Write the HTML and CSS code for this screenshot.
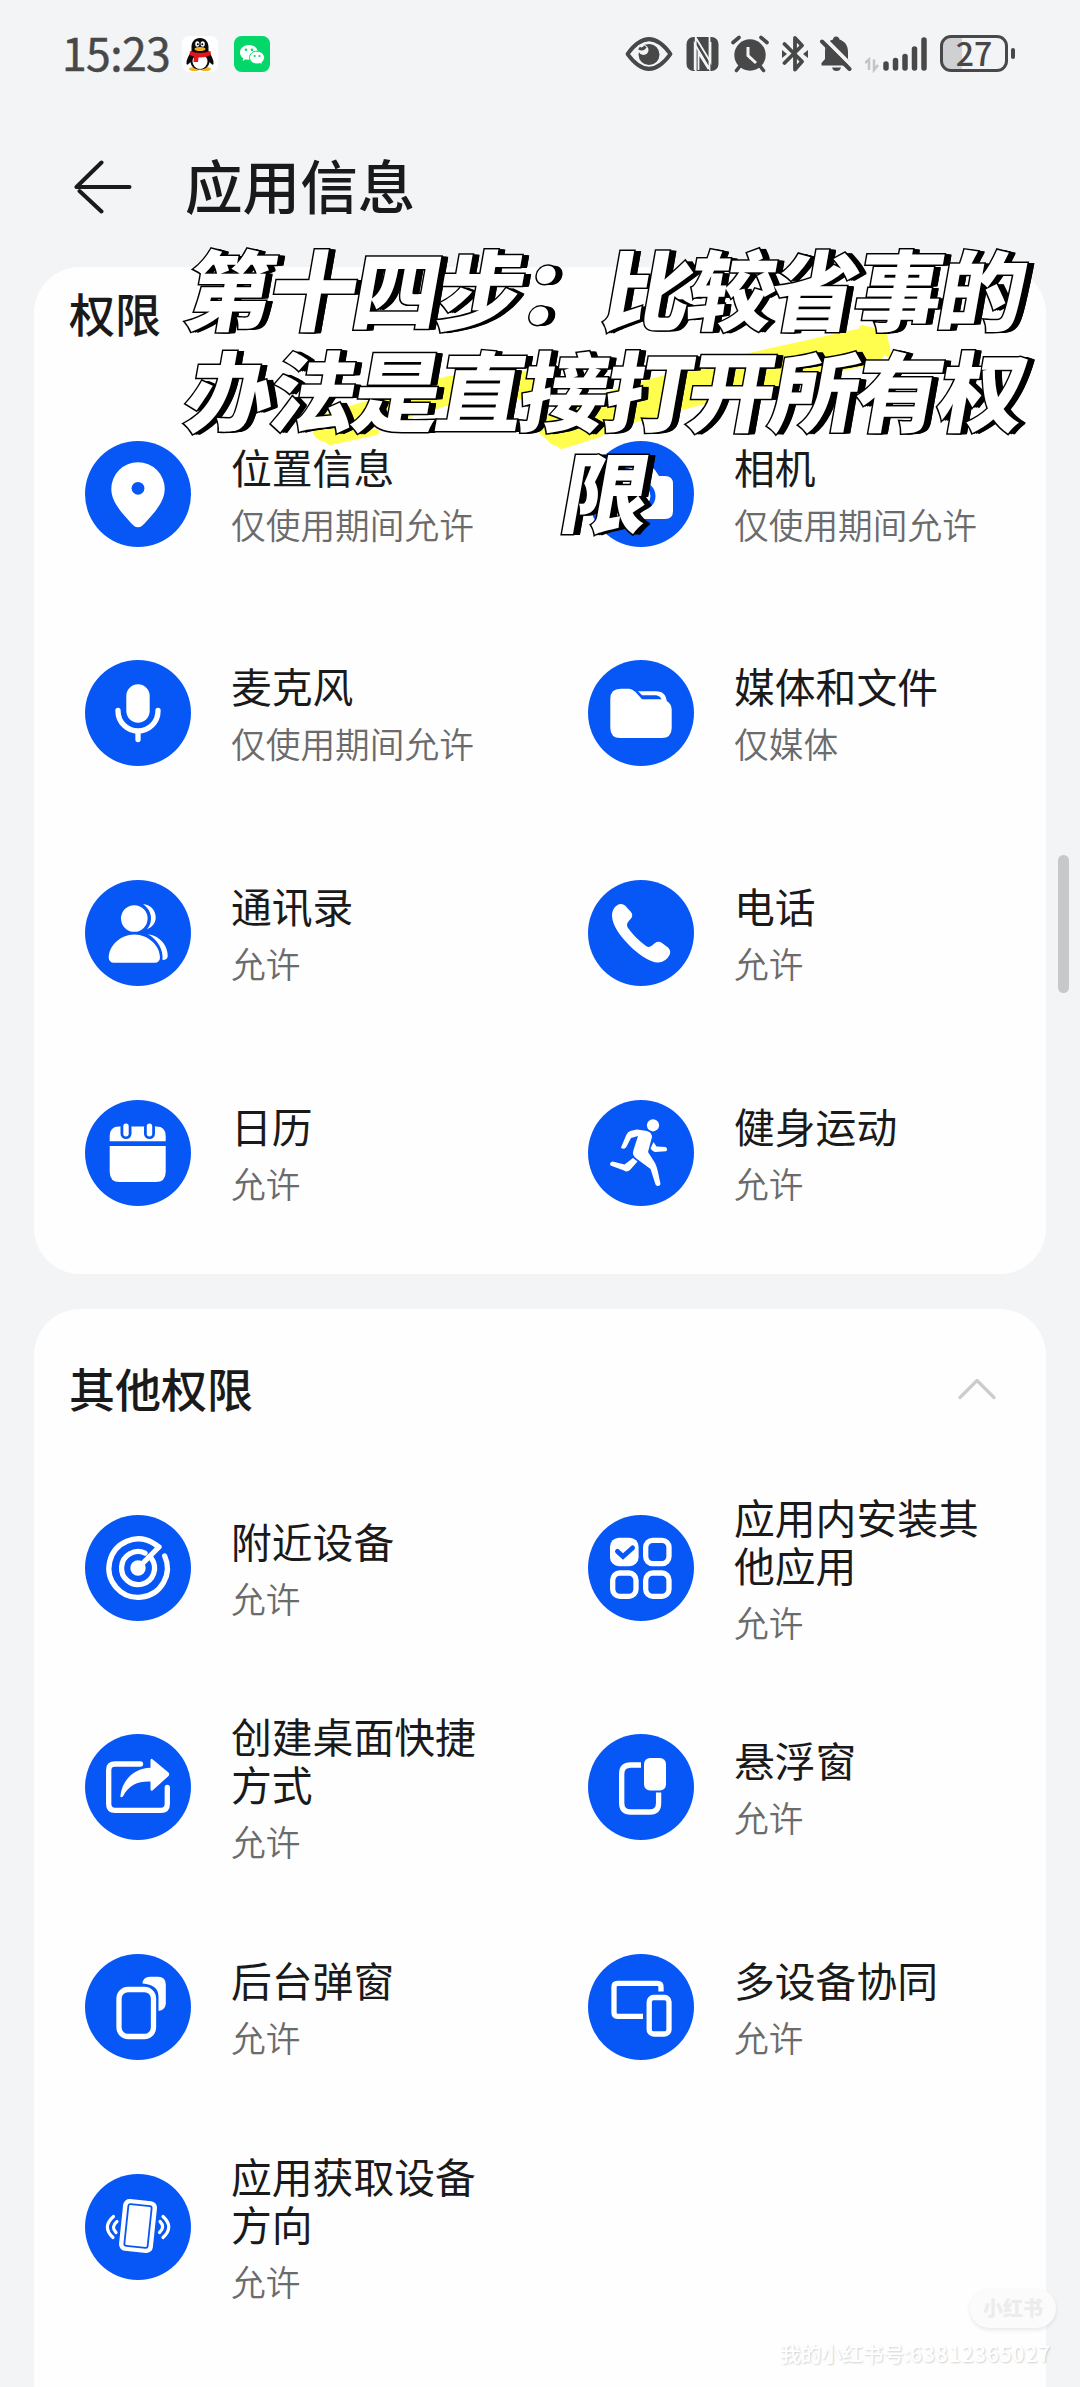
FILE: index.html
```html
<!DOCTYPE html>
<html lang="zh-CN">
<head>
<meta charset="utf-8">
<title>应用信息</title>
<link rel="stylesheet" href="styles.css">
</head>
<body>
<div class="page">
  <header class="status">
    <span class="time">15:23</span>
    <svg class="app-icon" width="36" height="36" viewBox="0 0 36 36">
      <rect width="36" height="36" rx="7" fill="#fff"/>
      <ellipse cx="12.5" cy="33" rx="5.5" ry="2" fill="#f5b21c"/><ellipse cx="23.5" cy="33" rx="5.5" ry="2" fill="#f5b21c"/>
      <path d="M18 2C12.500 2 9.500 6 9.500 11V15C7 19 4 24 4.500 28C5.500 30 7.500 27 8.500 26C9 31 13 33.500 18 33.500S27 31 27.500 26C28.500 27 30.500 30 31.500 28C32 24 29 19 26.500 15V11C26.500 6 23.500 2 18 2Z" fill="#0a0a0a"/>
      <ellipse cx="18" cy="25.500" rx="7.500" ry="7.500" fill="#fff"/>
      <path d="M8 15Q18 19 28.500 15L29 19Q23 22 16.500 21.500L16 26H11.500L12 20.500L7.500 19Z" fill="#e3141c"/>
      <ellipse cx="15.300" cy="8" rx="2.100" ry="2.800" fill="#fff"/><ellipse cx="20.700" cy="8" rx="2.100" ry="2.800" fill="#fff"/>
      <circle cx="15.800" cy="8.300" r="1"/><circle cx="20.300" cy="8.300" r="1"/>
      <ellipse cx="18" cy="13" rx="5.500" ry="2" fill="#f5b21c"/>
    </svg>
    <svg class="app-icon wechat" width="36" height="36" viewBox="0 0 36 36">
      <rect width="36" height="36" rx="7.500" fill="#04d76a"/>
      <path d="M15 9C9.800 9 6 12.300 6 16.500C6 19 7.300 21 9.300 22.300L8.600 25L11.800 23.300Q13.300 23.800 15 23.800C20.200 23.800 24 20.700 24 16.500S20.200 9 15 9Z" fill="#fff"/>
      <path d="M23 15.200C18.700 15.200 15.500 18 15.500 21.600S18.700 28 23 28Q24.500 28 25.800 27.500L28.300 28.800L27.800 26.500C29.500 25.300 30.500 23.600 30.500 21.600C30.500 18 27.300 15.200 23 15.200Z" fill="#fff" stroke="#04d76a"/>
      <g fill="#04d76a"><circle cx="12" cy="13.800" r="1.300"/><circle cx="18" cy="13.800" r="1.300"/><circle cx="20.700" cy="20" r="1.100"/><circle cx="25.500" cy="20" r="1.100"/></g>
    </svg>
    <div class="indicators">
      <svg width="48" height="38" viewBox="0 0 48 38"><path d="M2.500 19Q24-8 45.500 19Q24 46 2.500 19Z" transform="translate(0 -1.900) scale(1 1.100)" fill="none" stroke="#484848" stroke-width="3.800" stroke-linejoin="round"/><circle cx="24" cy="19.500" r="10.500" fill="#484848"/><circle cx="18.500" cy="15" r="5" fill="#f2f4f6"/><path d="M14 13Q17.500 15.500 20.500 11.500" fill="none" stroke="#484848" stroke-width="3"/></svg>
      <svg width="33" height="38" viewBox="0 0 33 38"><rect x=".5" y="2" width="32" height="34" rx="7" fill="#484848"/><path d="M9.700 36V2.500L24.500 27V7" fill="none" stroke="#f2f4f5" stroke-width="1.800"/><path d="M8.700 35V9L23.500 34V2" fill="none" stroke="#f2f4f5" stroke-width="1.800"/><path d="M12.500 35V18L22.500 34" fill="none" stroke="#f2f4f5" stroke-width="1.800"/></svg>
      <svg width="38" height="38" viewBox="0 0 38 38"><g stroke="#484848" stroke-width="3.600" stroke-linecap="round"><path d="M2 7.500L8 2.500M36 7.500L30 2.500M9 31L5.500 35.500M29 31L32.500 35.500"/></g><circle cx="19" cy="20" r="15.700" fill="#484848"/><path d="M17 12V20.500L25 28" fill="none" stroke="#f2f4f5" stroke-width="3"/></svg>
      <svg width="26" height="38" viewBox="0 0 26 38"><path d="M2.500 9L20 26.500L13 34.500V3L20 10.500L2.500 28" fill="none" stroke="#484848" stroke-width="3.800" stroke-linejoin="round" stroke-linecap="round"/><path d="M0 15L5 19L0 23ZM26 15L21 19L26 23Z" fill="#484848"/></svg>
      <svg width="32" height="38" viewBox="0 0 32 38"><path d="M16 1.500C14 1.500 13 3 13 4.500C7 6.500 5 11 5 17V24L1.500 28V30.500H30.500V28L28 24V17C28 10.500 25 6.500 19.500 4.500C19.500 3 18 1.500 16 1.500ZM12 32.500H21Q20 36 16.500 36Q13 36 12 32.500Z" fill="#484848"/><path d="M4.500 3.500L34 33" stroke="#f2f4f5" stroke-width="4"/><path d="M2 6.500L29.500 34" stroke="#484848" stroke-width="4" stroke-linecap="round"/></svg>
      <svg class="signal" width="62" height="38" viewBox="0 0 62 38"><path d="M0 28L4 24.500V35M9 24.500V35L13 30" fill="none" stroke="#c3c5c6" stroke-width="2.500"/><g stroke="#484848" stroke-width="5.500" stroke-linecap="round"><path d="M21 29V33M30.500 25.500V33M40 21.500V33M49.500 14V33M59 5V33"/></g></svg>
      <div class="battery"><span>27</span></div>
      <i class="nub"></i>
    </div>
  </header>

  <div class="titlebar">
    <svg width="58" height="54" viewBox="0 0 58 54"><path d="M27.500 2.500L2.500 27H55.500M5.500 31L27.500 51.500" fill="none" stroke="#191a1b" stroke-width="4" stroke-linecap="round" stroke-linejoin="round"/></svg>
    <h1>应用信息</h1>
  </div>

  <section class="card">
    <div class="card-head"><h2>权限</h2></div>
    <div class="grid">
      <div class="item"><svg class="ic" viewBox="0 0 106 106"><circle class="b" cx="53" cy="53" r="53"/><path class="w" d="M53 86.300C50 86.300 48 84 46 82C35 70 26.300 60 26.300 47.800A26.700 26.500 0 0 1 79.700 47.800C79.700 60 71 70 60 82C58 84 56 86.300 53 86.300Z"/><circle class="b" cx="53" cy="47.300" r="6.400"/></svg><div class="txt"><h3>位置信息</h3><p>仅使用期间允许</p></div></div>
      <div class="item"><svg class="ic" viewBox="0 0 106 106"><circle class="b" cx="53" cy="53" r="53"/><path class="w" d="M30 35H35L39 29Q40.500 27 43 27H63Q65.500 27 67 29L71 35H77Q85 35 85 43V70Q85 78 77 78H29Q21 78 21 70V43Q21 35 30 35Z"/><circle class="s" cx="53" cy="55" r="12" stroke="#0757f7" stroke-width="5"/></svg><div class="txt"><h3>相机</h3><p>仅使用期间允许</p></div></div>
      <div class="item"><svg class="ic" viewBox="0 0 106 106"><circle class="b" cx="53" cy="53" r="53"/><rect class="w" x="41.300" y="24.300" width="23.400" height="38.400" rx="11.700"/><path class="l" d="M33 50.500V51A20 20 0 0 0 73 51V50.500M53 72V79.500"/></svg><div class="txt"><h3>麦克风</h3><p>仅使用期间允许</p></div></div>
      <div class="item"><svg class="ic" viewBox="0 0 106 106"><circle class="b" cx="53" cy="53" r="53"/><path class="w" d="M32.500 28.700H41Q44 28.700 46.500 31.200H68C75 31.200 78 35 78.800 41Q83.700 44 83.700 50V68Q83.700 78 73.700 78H32.300Q22.300 78 22.300 68V39Q22.300 28.700 32.500 28.700Z"/><path class="b" d="M45.500 29.700L54 39.300H73.500Q72 35.800 68 35.300H54L49 30Z"/></svg><div class="txt"><h3>媒体和文件</h3><p>仅媒体</p></div></div>
      <div class="item"><svg class="ic" viewBox="0 0 106 106"><circle class="b" cx="53" cy="53" r="53"/><circle class="w" cx="49.300" cy="38.500" r="13.300"/><path class="w" d="M58 24.300A16.500 16.500 0 0 1 62 49.300C67.500 47 70.700 43 70.700 37.500C70.700 30 65 24.300 58 24.300ZM28.700 82.700A5 5 0 0 1 23.700 77.500C24 66 35 54.500 49.300 54.500S75 66 75 77.500A5 5 0 0 1 70 82.700ZM63 54.300C76 56 83 67 82.700 76Q82.500 80 77.500 80C78.500 70 73 60 63 54.300Z"/></svg><div class="txt"><h3>通讯录</h3><p>允许</p></div></div>
      <div class="item"><svg class="ic" viewBox="0 0 106 106"><circle class="b" cx="53" cy="53" r="53"/><path class="w" d="M24 36C24 30 27 26 31 24.300Q34.500 23.300 37 25.500L43 32Q45.500 35.500 43 38.500L40 42Q38 45 40 48C45 55 51 61 58 66Q61 68 64 65.500L67 63Q70.500 60.500 74 63L80 67.500Q83.500 71 81.500 75Q78 82 70 82.600C62 82.500 49 73.500 41 65C33 57 24.500 46 24 36Z"/></svg><div class="txt"><h3>电话</h3><p>允许</p></div></div>
      <div class="item"><svg class="ic" viewBox="0 0 106 106"><circle class="b" cx="53" cy="53" r="53"/><path class="w" d="M24.700 41.300V36Q24.700 26.500 34 26.500H71.500Q80.700 26.500 80.700 36V41.300ZM24.700 46H80.700V72Q80.700 82 70.700 82H34.700Q24.700 82 24.700 72Z"/><g class="b"><rect x="35.500" y="22" width="11" height="17" rx="5.500"/><rect x="59" y="22" width="11" height="17" rx="5.500"/></g><g class="w"><rect x="38.300" y="23.500" width="5.400" height="13" rx="2.700"/><rect x="61.800" y="23.500" width="5.400" height="13" rx="2.700"/></g></svg><div class="txt"><h3>日历</h3><p>允许</p></div></div>
      <div class="item"><svg class="ic" viewBox="0 0 106 106"><circle class="b" cx="53" cy="53" r="53"/><circle class="w" cx="65" cy="25.300" r="6.100"/><path class="w" d="M49 29.500L59 31Q64 32.500 64 37L60 52L67 63Q69 67 70 72L72.500 84Q72 86.500 69 86L67.500 84.500L62.500 69L49 59Q43.500 55.500 45.500 50L50 36L43 38L38 47.500Q35 50 33 47.500L38.500 34.500Q40 31.500 43 30.700Z"/><path class="w" d="M65.500 42L68.500 46.500L77.500 47Q80.500 49 78 51.300L67 52Q64 51 62.500 48.500ZM45 58L49.500 61.500L42 70Q39 72.500 36 70.500L22.500 65.500Q21 62.500 24.500 61.500L36.500 64.500Z"/></svg><div class="txt"><h3>健身运动</h3><p>允许</p></div></div>
    </div>
  </section>

  <section class="card other">
    <div class="card-head"><h2>其他权限</h2><svg width="38" height="22" viewBox="0 0 38 22"><path d="M2 19.500L19 2.500L36 19.500" fill="none" stroke="#cbcccc" stroke-width="3.200" stroke-linecap="round" stroke-linejoin="round"/></svg></div>
    <div class="grid">
      <div class="item"><svg class="ic" viewBox="0 0 106 106"><circle class="b" cx="53" cy="53" r="53"/><path class="l" d="M79.700 41A29.200 29.200 0 1 1 68.500 28.300L74 32L53 53M66.500 43.500A16.500 16.500 0 1 1 60 38.100"/><circle class="w" cx="53" cy="53" r="7.700"/></svg><div class="txt"><h3>附近设备</h3><p>允许</p></div></div>
      <div class="item"><svg class="ic" viewBox="0 0 106 106"><circle class="b" cx="53" cy="53" r="53"/><rect class="w" x="22" y="22.700" width="28.600" height="28.500" rx="9"/><g class="l"><rect x="57.700" y="25.300" width="23.300" height="23.300" rx="7"/><rect x="24.700" y="58" width="23.300" height="23.300" rx="7"/><rect x="57.700" y="58" width="23.300" height="23.300" rx="7"/></g><path class="s" d="M29.500 36.500L35 41.500L44.500 33" stroke="#0757f7" stroke-width="5" stroke-linecap="round"/></svg><div class="txt"><h3>应用内安装其他应用</h3><p>允许</p></div></div>
      <div class="item"><svg class="ic" viewBox="0 0 106 106"><circle class="b" cx="53" cy="53" r="53"/><path class="l" d="M55.500 30H30Q23.700 30 23.700 36V70Q23.700 76.300 30 76.300H76Q82.300 76.300 82.300 70V53.500"/><path class="w" d="M67.500 25.300L83.500 38.500Q85 40.300 83.500 42L67.500 56.500Q65.500 57.500 65.500 55V47.500C53 47 44 51 38.500 61.500Q37 64.500 35.300 62.500C37 46 49 34 65.500 33.700V26.500Q65.500 24 67.500 25.300Z"/></svg><div class="txt"><h3>创建桌面快捷方式</h3><p>允许</p></div></div>
      <div class="item"><svg class="ic" viewBox="0 0 106 106"><circle class="b" cx="53" cy="53" r="53"/><path class="l butt" d="M53 31H42.500Q33.700 31 33.700 40V69Q33.700 78 42.500 78H62Q70.600 78 70.600 69V58.500"/><rect class="w" x="56" y="24" width="22" height="32.500" rx="6"/></svg><div class="txt"><h3>悬浮窗</h3><p>允许</p></div></div>
      <div class="item"><svg class="ic" viewBox="0 0 106 106"><circle class="b" cx="53" cy="53" r="53"/><rect class="l" x="34" y="35.500" width="34.500" height="47" rx="9"/><path class="w" d="M57.500 29.500Q58 22.700 65 22.700H73Q80.800 22.700 80.800 30.500V50Q80 56 73.500 57V42Q73 30.500 57.500 29.500Z"/></svg><div class="txt"><h3>后台弹窗</h3><p>允许</p></div></div>
      <div class="item"><svg class="ic" viewBox="0 0 106 106"><circle class="b" cx="53" cy="53" r="53"/><path class="l butt" d="M73 37.500V33Q73 29.300 69.500 29.300H29.500Q26 29.300 26 33V58.500Q26 62.300 29.500 62.300H55"/><rect class="l" x="61.200" y="43.500" width="19.800" height="36.500" rx="4.500"/></svg><div class="txt"><h3>多设备协同</h3><p>允许</p></div></div>
      <div class="item"><svg class="ic" viewBox="0 0 106 106"><circle class="b" cx="53" cy="53" r="53"/><g transform="rotate(6 53 52)"><rect class="w" x="36" y="26" width="34" height="52" rx="6.500"/><rect class="s" x="41.300" y="31" width="23.400" height="42" rx="2" stroke="#0757f7" stroke-width="1.800"/></g><g class="s" stroke="#fff" stroke-width="3.200" stroke-linecap="round"><path d="M28.500 42.500Q16.500 53 28 63.500M32 47.500Q25.500 53 31 58.500M78 42.500Q89.500 53 78 63.500M75 47.500Q80.500 53 74.500 58.500"/></g></svg><div class="txt"><h3>应用获取设备方向</h3><p>允许</p></div></div>
    </div>
  </section>

  <i class="scrollbar"></i>

  <svg class="brush" width="600" height="140" viewBox="0 0 600 140">
    <g fill="none" stroke="#fffe4e" stroke-linejoin="round" stroke-linecap="round">
      <path d="M26 108L150 70L240 64" stroke-width="28"/>
      <path d="M262 108L330 84L460 50L568 26" stroke-width="38"/>
      <path d="M10 106L30 122L76 112M242 112L262 126L300 114M562 8L584 14L588 34" stroke-width="6"/>
    </g>
  </svg>
  <p class="caption"><span>第十四步：比较省事的</span><span>办法是直接打开所有权</span><span>限</span></p>

  <div class="watermark"><span class="pill">小红书</span><span class="uid">我的小红书号:<b>63812365027</b></span></div>
</div>
</body>
</html>
```
FILE: styles.css
```css
* { box-sizing: border-box; }
body {
  margin: 0;
  font-family: "Noto Sans CJK SC", sans-serif;
  color: #1a1a1b;
}
h1, h2, h3, p { margin: 0; font-weight: 400; }
svg { display: block; flex: none; }

.page {
  position: relative;
  width: 1080px;
  height: 2387px;
  overflow: hidden;
  background: #f2f4f6;
  display: flex;
  flex-direction: column;
}

.status {
  height: 107px;
  padding: 0 65px 0 62px;
  display: flex;
  align-items: center;
  color: #484848;
}
.time {
  width: 120px;
  padding-bottom: 3px;
  font-size: 44.5px;
  line-height: 60px;
  letter-spacing: -.6px;
  -webkit-text-stroke: .5px #484848;
}
.wechat { margin-left: 16px; }
.indicators { margin-left: auto; display: flex; align-items: center; }
.indicators svg + svg { margin-left: 12.6px; }
.battery {
  width: 68px;
  height: 37px;
  margin-left: 13px;
  border: 3px solid #484848;
  border-radius: 11px;
  background: linear-gradient(90deg, #ced0d1 30%, transparent 30%);
  display: flex;
  align-items: center;
  justify-content: center;
  padding-bottom: 4px;
  font: 500 32px/30px "Noto Sans CJK SC", sans-serif;
}
.nub { width: 4px; height: 11px; margin-left: 3px; border-radius: 2px; background: #484848; }

.titlebar {
  height: 160px;
  padding-left: 74px;
  display: flex;
  align-items: center;
  gap: 53px;
}
.titlebar h1 { padding-bottom: 6px; font-size: 57.6px; line-height: 80px; font-weight: 500; }

.card {
  width: 1012px;
  height: 1007px;
  margin-left: 34px;
  border-radius: 46px;
  background: #fefefe;
}
.card.other {
  flex: 1;
  margin-top: 35px;
  border-radius: 46px 46px 0 0;
}
.card-head {
  height: 117px;
  padding: 15px 50px 0 35px;
  display: flex;
  justify-content: space-between;
  align-items: flex-start;
}
.card-head h2 { font-size: 46px; line-height: 60px; font-weight: 500; }
.other .card-head { height: 149px; padding-top: 10px; align-items: center; }
.other .card-head h2 { padding-bottom: 4px; }

.grid {
  padding-left: 51px;
  display: grid;
  grid-template-columns: 503px 1fr;
  grid-auto-rows: 219.6px;
}
.item { display: flex; align-items: center; gap: 40px; }
.ic { width: 106px; height: 106px; }
.txt { width: 260px; }
.txt h3 { font-size: 40.8px; line-height: 48px; }
.txt p { margin-top: 13px; font-size: 34.7px; line-height: 41px; color: #6b6b6b; font-weight: 350; }

.b { fill: #0757f7; }
.w { fill: #fff; }
.s { fill: none; }
.l {
  fill: none;
  stroke: #fff;
  stroke-width: 5.3px;
  stroke-linecap: round;
  stroke-linejoin: round;
}
.butt { stroke-linecap: butt; }

.scrollbar {
  position: absolute;
  left: 1058px;
  top: 855px;
  width: 11px;
  height: 138px;
  border-radius: 6px;
  background: #c6c8c9;
}

.brush { position: absolute; left: 300px; top: 320px; }
.caption {
  position: absolute;
  left: 186px;
  top: 236px;
  width: 840px;
  text-align: center;
  white-space: nowrap;
  font-size: 87px;
  line-height: 101px;
  letter-spacing: -3.4px;
  font-weight: 900;
  color: #fff;
  -webkit-text-stroke: 3px #000;
  paint-order: stroke fill;
  text-shadow:
    1px 0 #000, 2px 0 #000, 3px 0 #000, 4px 0 #000, 5px 0 #000, 6px 0 #000, 7px 0 #000,
    2px 1px #000, 4px 1px #000, 6px 1px #000, 7px 1px #000;
}
.caption span { display: block; transform: skewX(-10deg); }

.watermark {
  position: absolute;
  right: 24px;
  top: 2289px;
  display: flex;
  flex-direction: column;
  align-items: flex-end;
  gap: 9px;
}
.pill {
  width: 86px;
  height: 39px;
  border-radius: 20px;
  background: #fbfbfb;
  box-shadow: 0 2px 4px rgba(0, 0, 0, .09);
  color: #ececec;
  font-size: 20px;
  line-height: 38px;
  font-weight: 900;
  text-align: center;
}
.uid {
  margin-right: 5px;
  font-size: 20.7px;
  line-height: 32px;
  font-weight: 500;
  color: #fff;
  white-space: nowrap;
  text-shadow: 1px 1px 2px rgba(0, 0, 0, .18);
}
.uid b { font-weight: 500; letter-spacing: 1px; }
```
